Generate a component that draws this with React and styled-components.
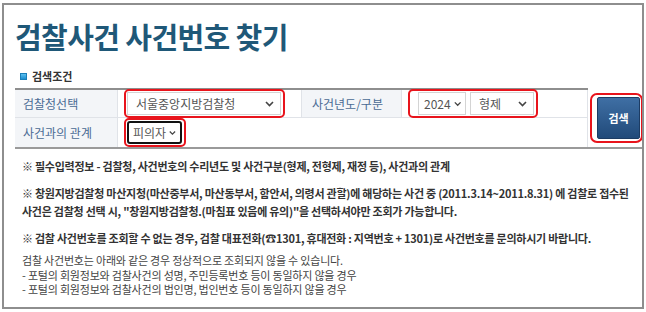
import styled, { createGlobalStyle } from 'styled-components'

const GlobalStyle = createGlobalStyle`
  html, body { margin: 0; padding: 0; background: #fff; }
  body { font-family: "Noto Sans CJK KR", "Noto Sans", sans-serif; color: #333; }
  * { box-sizing: border-box; }
`

function Chevron(){
  return (
    <svg width="9" height="6" viewBox="0 0 9 6">
      <path d="M1 1 L4.5 4.5 L8 1" fill="none" stroke="#444" strokeWidth="1.6" />
    </svg>
  )
}

function Select({ value, width, focused, pad }){
  return (
    <SelectBox $width={width} $focused={focused} $pad={pad}>
      <span>{value}</span>
      <Chevron/>
    </SelectBox>
  )
}

export default function App(){
  return (
    <>
      <GlobalStyle/>
      <Frame>
        <Title>검찰사건 사건번호 찾기</Title>
        <SectionHead>
          <Bullet/>
          검색조건
        </SectionHead>
        <SearchArea>
          <Table>
            <Label>검찰청선택</Label>
            <Cell>
              <Mark>
                <Select value="서울중앙지방검찰청" width={154}/>
              </Mark>
            </Cell>
            <Label $pad={10}>사건년도/구분</Label>
            <Cell>
              <Mark $left={8}>
                <Select value="2024" width={48} pad={5}/>
                <Select value="형제" width={64}/>
              </Mark>
            </Cell>
            <Label $last>사건과의 관계</Label>
            <Cell $span $last>
              <Mark>
                <Select value="피의자" width={55} pad={4} focused/>
              </Mark>
            </Cell>
          </Table>
          <ButtonCell>
            <ButtonMark>
              <SearchButton>검색</SearchButton>
            </ButtonMark>
          </ButtonCell>
        </SearchArea>
        <Notes>
          <Note>※ 필수입력정보 - 검찰청, 사건번호의 수리년도 및 사건구분(형제, 전형제, 재정 등), 사건과의 관계</Note>
          <Note>
            ※ 창원지방검찰청 마산지청(마산중부서, 마산동부서, 함안서, 의령서 관할)에 해당하는 사건 중 (2011.3.14~2011.8.31) 에 검찰로 접수된<br/>
            사건은 검찰청 선택 시, "창원지방검찰청.(마침표 있음에 유의)"을 선택하셔야만 조회가 가능합니다.
          </Note>
          <Note>※ 검찰 사건번호를 조회할 수 없는 경우, 검찰 대표전화(☎1301, 휴대전화 : 지역번호 + 1301)로 사건번호를 문의하시기 바랍니다.</Note>
          <Plain>
            검찰 사건번호는 아래와 같은 경우 정상적으로 조회되지 않을 수 있습니다.<br/>
            - 포털의 회원정보와 검찰사건의 성명, 주민등록번호 등이 동일하지 않을 경우<br/>
            - 포털의 회원정보와 검찰사건의 법인명, 법인번호 등이 동일하지 않을 경우
          </Plain>
        </Notes>
      </Frame>
    </>
  )
}

const Frame = styled.div`
  margin: 3px 2px 0 2px;
  width: 642px;
  height: 306px;
  border: 2px solid #8e8e8e;
  padding: 0 0 0 11px;
  overflow: hidden;
`
const Title = styled.h1`
  margin: 13px 0 0 0;
  font-size: 29px;
  line-height: 36px;
  font-weight: 700;
  color: #1f5878;
  letter-spacing: -0.6px;
`
const SectionHead = styled.div`
  display: flex;
  align-items: center;
  gap: 5px;
  margin: 14px 0 0 5px;
  height: 16px;
  font-size: 11px;
  font-weight: 700;
  color: #333;
`
const Bullet = styled.span`
  width: 7px;
  height: 7px;
  background: linear-gradient(#5cc0f0, #1d8fd0);
  border: 1px solid #1b7fb8;
`
const SearchArea = styled.div`
  display: flex;
  margin-top: 4px;
  border-bottom: 2px solid #9a9a9a;
`
const Table = styled.div`
  display: grid;
  grid-template-columns: 103px 184px 100px 186px;
  grid-template-rows: 28px 29px;
  border-top: 2px solid #8e8e8e;
`
const Label = styled.div`
  display: flex;
  align-items: center;
  padding-left: ${p => p.$pad || 8}px;
  background: #f3f5f8;
  color: #4a6b94;
  font-size: 12px;
  border-right: 1px solid #e0e3e8;
  border-bottom: ${p => p.$last ? 'none' : '1px solid #e0e3e8'};
`
const Cell = styled.div`
  display: flex;
  align-items: center;
  padding-left: 6px;
  grid-column: ${p => p.$span ? 'span 3' : 'auto'};
  border-right: 1px solid #e0e3e8;
  border-bottom: ${p => p.$last ? 'none' : '1px solid #e0e3e8'};
`
const Mark = styled.div`
  display: inline-flex;
  gap: 4px;
  padding: 1px 2px 1px ${p => p.$left || 1}px;
  border: 2px solid #e8141c;
  border-radius: 5px;
`
const SelectBox = styled.div`
  display: flex;
  flex-shrink: 0;
  align-items: center;
  justify-content: space-between;
  gap: 3px;
  width: ${p => p.$width}px;
  height: 23px;
  padding: 0 ${p => p.$pad ? 4 : 6}px 0 ${p => p.$pad || 8}px;
  border: ${p => p.$focused ? '2px solid #111' : '1px solid #d4d4d4'};
  border-radius: ${p => p.$focused ? '3px' : '0'};
  background: #fff;
  font-size: 12px;
  color: #555;
  white-space: nowrap;
`
const ButtonCell = styled.div`
  display: flex;
  align-items: center;
  padding-left: 2px;
`
const ButtonMark = styled.div`
  padding: 2px 1px 2px 5px;
  border: 2px solid #e8141c;
  border-radius: 7px;
`
const SearchButton = styled.button`
  width: 43px;
  height: 42px;
  border: 1px solid #1c3c64;
  border-radius: 2px;
  background: linear-gradient(#3f6fa4, #214a7a);
  color: #fff;
  font-family: inherit;
  font-size: 11px;
  font-weight: 700;
  padding: 0;
`
const Notes = styled.div`
  margin: 8px 0 0 7px;
`
const Note = styled.p`
  margin: 0 0 9px 0;
  font-size: 11px;
  line-height: 18px;
  font-weight: 700;
  color: #333;
  letter-spacing: -0.25px;
  white-space: nowrap;
`
const Plain = styled.p`
  margin: -3px 0 0 0;
  font-size: 11px;
  line-height: 14.5px;
  color: #444;
  letter-spacing: -0.2px;
`
